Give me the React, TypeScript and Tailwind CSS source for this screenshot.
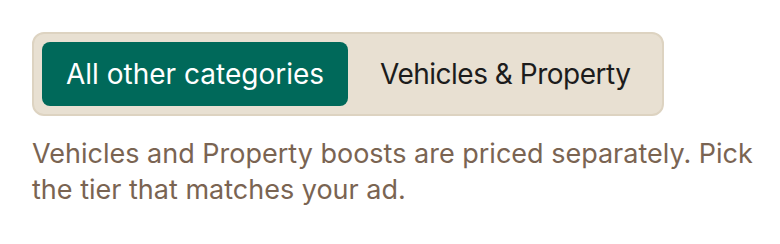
import { useState } from "react";

const tabs = ["All other categories", "Vehicles & Property"];

export default function App() {
  const [active, setActive] = useState(0);
  return (
    <div className="min-h-[244px] bg-white pl-8 pt-8 pr-4 font-['Inter',sans-serif]">
      <div className="inline-flex gap-2 rounded-xl border-2 border-[#ddd3c1] bg-[#e8e0d2] p-2">
        {tabs.map((t, i) => (
          <button
            key={t}
            onClick={() => setActive(i)}
            className={
              i === active
                ? "rounded-lg bg-[#00695a] px-6 py-4 text-[28px] leading-8 text-white"
                : "rounded-lg px-6 py-4 text-[28px] leading-8 tracking-[-0.5px] text-[#1c1c1c]"
            }
          >
            {t}
          </button>
        ))}
      </div>
      <p className="mt-5 max-w-[735px] text-[27px] leading-9 text-[#7a6452]">
        Vehicles and Property boosts are priced separately. Pick the tier that matches your ad.
      </p>
    </div>
  );
}
